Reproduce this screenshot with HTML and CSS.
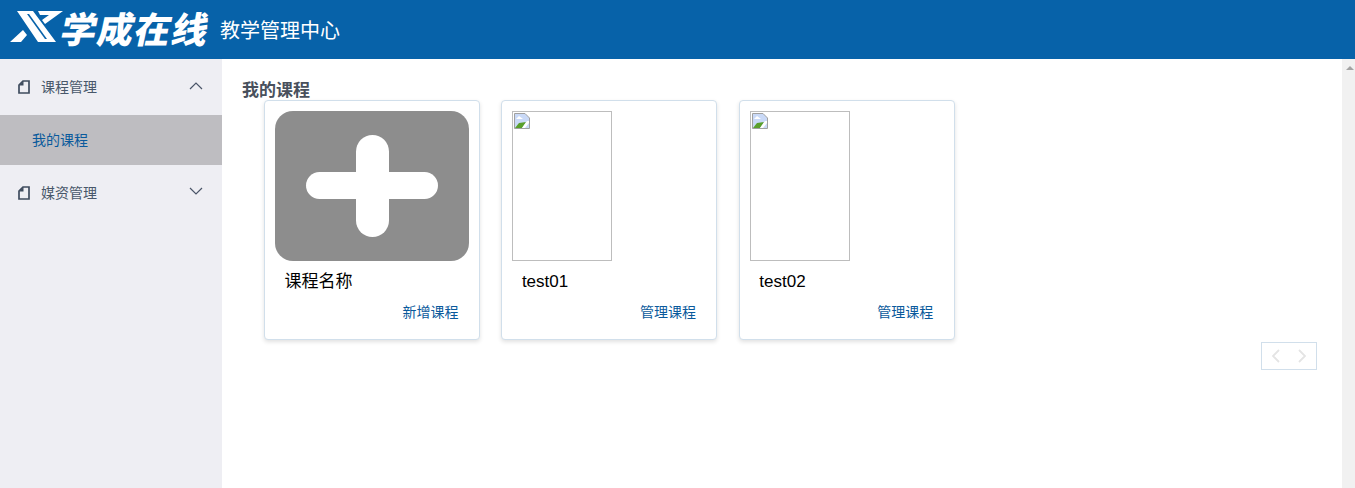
FILE: index.html
```html
<!DOCTYPE html>
<html lang="zh-CN">
<head>
<meta charset="utf-8">
<title>教学管理中心</title>
<link rel="stylesheet" href="styles.css">
</head>
<body>
<header class="topbar">
  <div class="logo">
    <svg class="logo-mark" width="53" height="32" viewBox="0 0 53 32">
      <path fill="#fff" d="M7 0H23L46 31H28ZM0 31 13 19 17 24 11 31ZM28 0H53L35 13 32 9 39 4H30Z"/>
      <path fill="#0762a9" d="M17 3 19 3 37 28 35 28Z"/>
    </svg>
    <span class="logo-text">学成在线</span>
  </div>
  <span class="app-title">教学管理中心</span>
</header>
<div class="layout">
  <nav class="sidebar">
    <div class="menu-head">
      <svg class="doc" width="12" height="14" viewBox="0 0 12 14"><path fill="none" stroke="#3f4c5e" stroke-width="1.700" d="M5 1H11V13H1V5Z"/><path fill="#3f4c5e" d="M5.500 1V5.500H1Z"/></svg>
      <span class="menu-label">课程管理</span>
      <svg class="chev" width="14" height="8" viewBox="0 0 14 8"><path fill="none" stroke="#4a5568" stroke-width="1.200" d="M1 7 7 1 13 7"/></svg>
    </div>
    <div class="menu-item">我的课程</div>
    <div class="menu-head">
      <svg class="doc" width="12" height="14" viewBox="0 0 12 14"><path fill="none" stroke="#3f4c5e" stroke-width="1.700" d="M5 1H11V13H1V5Z"/><path fill="#3f4c5e" d="M5.500 1V5.500H1Z"/></svg>
      <span class="menu-label">媒资管理</span>
      <svg class="chev chev-down" width="14" height="8" viewBox="0 0 14 8"><path fill="none" stroke="#4a5568" stroke-width="1.200" d="M1 1 7 7 13 1"/></svg>
    </div>
  </nav>
  <main class="content">
    <h2 class="page-title">我的课程</h2>
    <div class="cards">
      <article class="card">
        <div class="add-cover"><span class="plus"></span></div>
        <div class="card-name">课程名称</div>
        <div class="card-foot"><a class="card-link">新增课程</a></div>
      </article>
      <article class="card">
        <div class="broken">
          <svg width="16" height="16" viewBox="0 0 16 16"><path fill="#c9d9f7" stroke="#a0a0a0" d="M.5.5H11L15.500 5V15.500H.5Z"/><path fill="#fff" d="M2 6 5 3 9 6Z"/><path fill="#5aa02c" d="M1 15 5 10 12 9 8 15Z"/><path fill="#fff" d="M8 15 13 8 15 8 15 10 11 15Z"/></svg>
        </div>
        <div class="card-name">test01</div>
        <div class="card-foot"><a class="card-link">管理课程</a></div>
      </article>
      <article class="card">
        <div class="broken">
          <svg width="16" height="16" viewBox="0 0 16 16"><path fill="#c9d9f7" stroke="#a0a0a0" d="M.5.5H11L15.500 5V15.500H.5Z"/><path fill="#fff" d="M2 6 5 3 9 6Z"/><path fill="#5aa02c" d="M1 15 5 10 12 9 8 15Z"/><path fill="#fff" d="M8 15 13 8 15 8 15 10 11 15Z"/></svg>
        </div>
        <div class="card-name">test02</div>
        <div class="card-foot"><a class="card-link">管理课程</a></div>
      </article>
    </div>
    <div class="pager">
      <svg width="8" height="14" viewBox="0 0 8 14"><path fill="none" stroke="#e4e4e4" stroke-width="1.800" d="M7 1 1 7 7 13"/></svg>
      <svg width="8" height="14" viewBox="0 0 8 14"><path fill="none" stroke="#e4e4e4" stroke-width="1.800" d="M1 1 7 7 1 13"/></svg>
    </div>
  </main>
  <div class="scrollbar"><span class="scroll-up"></span></div>
</div>
</body>
</html>
```
FILE: styles.css
```css
* { box-sizing: border-box; }
html, body { margin: 0; height: 488px; overflow: hidden; }
body {
  font-family: "Liberation Sans", "Noto Sans CJK SC", sans-serif;
  display: flex;
  flex-direction: column;
  background: #fff;
}
.topbar {
  height: 59px;
  flex: none;
  background: #0762a9;
  display: flex;
  align-items: center;
  padding-left: 10px;
  color: #fff;
}
.logo { display: flex; align-items: center; width: 210px; padding-bottom: 6px; }
.logo-mark { flex: none; }
.logo-text {
  font-family: "Noto Sans CJK SC", sans-serif;
  font-weight: 900;
  font-size: 36px;
  line-height: 36px;
  letter-spacing: 1px;
  white-space: nowrap;
  display: inline-block;
  margin-left: -1px;
  transform: skewX(-12deg);
  transform-origin: left center;
}
.app-title { font-size: 20px; line-height: 24px; font-family: "Noto Sans CJK SC", sans-serif; }
.layout { flex: 1; display: flex; min-height: 0; }
.sidebar { width: 222px; flex: none; background: #eeeef3; }
.menu-head {
  height: 56px;
  display: flex;
  align-items: center;
  padding: 0 19px 0 18px;
  color: #48576a;
  font-size: 14px;
}
.menu-label { margin-left: 11px; flex: 1; padding-bottom: 2px; }
.chev { margin-top: -2px; }
.chev-down { margin-top: -4px; }
.menu-item {
  height: 50px;
  background: #bebdc1;
  display: flex;
  align-items: center;
  padding: 0 0 2px 32px;
  font-size: 14px;
  color: #0a5a9c;
}
.content { flex: 1; position: relative; padding: 20px 25px 0 20px; min-width: 0; }
.page-title {
  margin: 0;
  font-size: 17px;
  line-height: 21px;
  font-weight: 700;
  color: #48505c;
  position: relative;
  top: 1px;
}
.cards { display: flex; gap: 21.400px; padding-left: 22px; }
.card {
  width: 216px;
  height: 240px;
  background: #fff;
  border: 1px solid #d1dfeb;
  border-radius: 4px;
  box-shadow: 0 2px 4px rgba(0, 0, 0, .12);
  padding: 10px;
}
.add-cover {
  width: 194px;
  height: 150px;
  background: #8d8d8d;
  border-radius: 18px;
  position: relative;
}
.plus { position: absolute; inset: 0; }
.plus::before, .plus::after {
  content: "";
  position: absolute;
  background: #fff;
}
.plus::before { left: 31px; top: 61px; width: 132px; height: 27px; border-radius: 14px; }
.plus::after { left: 81px; top: 24px; width: 33px; height: 102px; border-radius: 17px; }
.broken {
  width: 100px;
  height: 150px;
  border: 1px solid #bdbdbd;
  padding: 1px;
  line-height: 0;
}
.card-name {
  font-size: 17px;
  line-height: 20px;
  margin-top: 11px;
  padding-left: 9.500px;
  color: #000;
}
.card-foot {
  display: flex;
  justify-content: flex-end;
  margin-top: 10px;
  padding-right: 10.500px;
}
.card-link { font-size: 14px; line-height: 20px; color: #0a5a9c; }
.pager {
  width: 56px;
  height: 28px;
  margin: 2px 0 0 auto;
  border: 1px solid #d1dfeb;
  display: flex;
  align-items: center;
  justify-content: center;
  gap: 18px;
}
.scrollbar { width: 13px; flex: none; background: #f1f1f1; position: relative; }
.scroll-up {
  position: absolute;
  left: 4px;
  top: 7px;
  border-left: 4px solid transparent;
  border-right: 4px solid transparent;
  border-bottom: 4px solid #a3a3a3;
}
```
